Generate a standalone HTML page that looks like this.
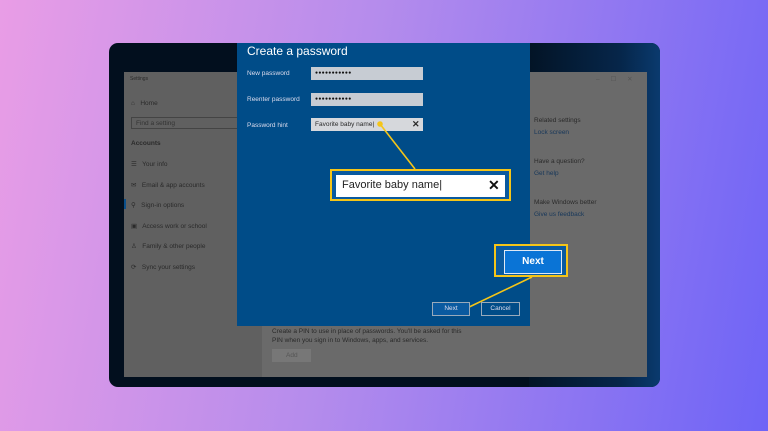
<!DOCTYPE html><html><head><style>
*{margin:0;padding:0;box-sizing:border-box}
body{width:768px;height:431px;overflow:hidden;background:linear-gradient(100deg,#e99de6 0%,#b58cec 45%,#6e64f6 100%);font-family:"Liberation Sans",sans-serif;position:relative}
.a{position:absolute}
.t{position:absolute;font-size:6.5px;color:#2a2a2a;white-space:nowrap}
.l{color:#17375a}
</style></head><body>
<div class="a" style="left:109px;top:43px;width:551px;height:344px;background:#020f1e;border-radius:9px;overflow:hidden">
 <div class="a" style="left:420px;top:0;width:131px;height:344px;background:linear-gradient(90deg,#031426,#06264a 70%,#0a3a6e)"></div>
</div>
<div class="a" style="left:124px;top:72px;width:138px;height:305px;background:#606060"></div>
<div class="a" style="left:262px;top:72px;width:385px;height:305px;background:#6a6a6a"></div>
<div class="t" style="left:130px;top:76px;font-size:5px">Settings</div>
<div class="t" style="left:131px;top:100px">⌂&nbsp;&nbsp; Home</div>
<div class="a" style="left:131px;top:117px;width:112px;height:12px;border:1px solid #444"></div>
<div class="t" style="left:136px;top:120px;color:#333">Find a setting</div>
<div class="t" style="left:131px;top:140px;font-weight:bold">Accounts</div>
<div class="t" style="left:131px;top:160px">☰&nbsp;&nbsp; Your info</div>
<div class="t" style="left:131px;top:181px">✉&nbsp;&nbsp; Email &amp; app accounts</div>
<div class="a" style="left:124px;top:199px;width:2px;height:10px;background:#0a4f8a"></div>
<div class="t" style="left:131px;top:201px">⚲&nbsp;&nbsp; Sign-in options</div>
<div class="t" style="left:131px;top:222px">▣&nbsp;&nbsp; Access work or school</div>
<div class="t" style="left:131px;top:242px">♙&nbsp;&nbsp; Family &amp; other people</div>
<div class="t" style="left:131px;top:263px">⟳&nbsp;&nbsp; Sync your settings</div>
<div class="t" style="left:596px;top:75px;color:#555">–&nbsp;&nbsp;&nbsp;&nbsp;&nbsp; ☐&nbsp;&nbsp;&nbsp;&nbsp;&nbsp; ✕</div>
<div class="t" style="left:534px;top:117px">Related settings</div>
<div class="t l" style="left:534px;top:129px">Lock screen</div>
<div class="t" style="left:534px;top:158px">Have a question?</div>
<div class="t l" style="left:534px;top:170px">Get help</div>
<div class="t" style="left:534px;top:199px">Make Windows better</div>
<div class="t l" style="left:534px;top:211px">Give us feedback</div>
<div class="t" style="left:272px;top:328px;line-height:8.5px">Create a PIN to use in place of passwords. You'll be asked for this<br>PIN when you sign in to Windows, apps, and services.</div>
<div class="a" style="left:272px;top:349px;width:39px;height:13px;background:#777"></div>
<div class="t" style="left:286px;top:352px;color:#555">Add</div>
<div class="a" style="left:237px;top:43px;width:293px;height:283px;background:#004c88"></div>
<div class="t" style="left:247px;top:44px;font-size:12px;color:#fff">Create a password</div>
<div class="t" style="left:247px;top:70px;color:#dde">New password</div>
<div class="a" style="left:311px;top:67px;width:112px;height:13px;background:#c7ccd3"></div>
<div class="t" style="left:315px;top:70px;font-size:5px;color:#111;letter-spacing:0.3px">●●●●●●●●●●●</div>
<div class="t" style="left:247px;top:96px;color:#dde">Reenter password</div>
<div class="a" style="left:311px;top:93px;width:112px;height:13px;background:#c7ccd3"></div>
<div class="t" style="left:315px;top:96px;font-size:5px;color:#111;letter-spacing:0.3px">●●●●●●●●●●●</div>
<div class="t" style="left:247px;top:122px;color:#dde">Password hint</div>
<div class="a" style="left:311px;top:118px;width:112px;height:13px;background:#d6d8dc"></div>
<div class="t" style="left:315px;top:121px">Favorite baby name|</div>
<div class="t" style="left:412px;top:119px;font-size:9px;font-weight:bold">✕</div>
<svg class="a" style="left:0;top:0" width="768" height="431"><g stroke="#f5c518" stroke-width="1.6" fill="#f5c518"><line x1="380" y1="124" x2="415" y2="169"/><line x1="465" y1="309" x2="532" y2="277"/><circle cx="380" cy="124" r="2"/><circle cx="465" cy="309" r="2"/></g></svg>
<div class="a" style="left:330px;top:169px;width:181px;height:32px;border:2px solid #f5c518;background:#0a5aa0"></div>
<div class="a" style="left:336px;top:175px;width:169px;height:22px;background:#fff"></div>
<div class="t" style="left:342px;top:179px;font-size:11px;color:#222">Favorite baby name|</div>
<div class="t" style="left:488px;top:177px;font-size:14px;font-weight:bold;color:#111">✕</div>
<div class="a" style="left:494px;top:244px;width:74px;height:33px;border:2px solid #f5c518;background:#0a5aa0"></div>
<div class="a" style="left:504px;top:250px;width:58px;height:24px;background:#0a74d6;border:1.5px solid #dfe9f5;color:#fff;font-size:10px;font-weight:bold;text-align:center;line-height:21px">Next</div>
<div class="a" style="left:432px;top:302px;width:38px;height:14px;border:1px solid #9ab;color:#dde;font-size:6.5px;text-align:center;line-height:12px;background:#0a5aa0">Next</div>
<div class="a" style="left:481px;top:302px;width:39px;height:14px;border:1px solid #9ab;color:#dde;font-size:6.5px;text-align:center;line-height:12px">Cancel</div>
</body></html>
